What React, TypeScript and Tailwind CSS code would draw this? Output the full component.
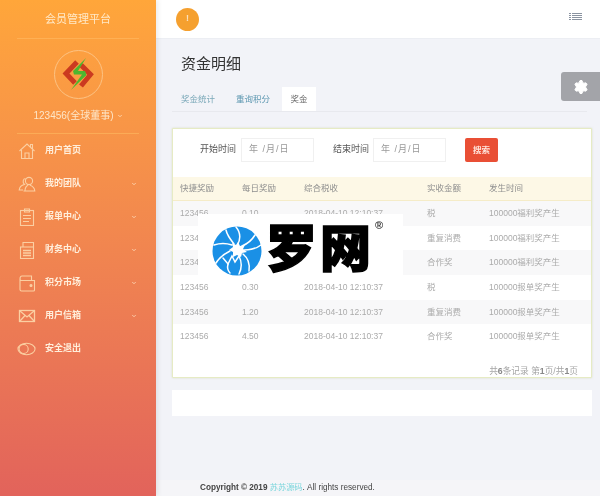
import { ChevronDown, Settings } from "lucide-react";

const font = { fontFamily: '"Liberation Sans", "Noto Sans CJK SC", sans-serif' };

const HomeIcon = () => (
  <svg width="18" height="18" viewBox="0 0 18 18" fill="none" stroke="currentColor" strokeWidth="1.1">
    <path d="M1.5 9 L9 2 L16.5 9" />
    <path d="M3.5 8 V16.5 H14.5 V8" />
    <path d="M7 16.5 V11 H11 V16.5" />
    <path d="M12.5 5 V2.5 H14.5 V7" />
  </svg>
);
const UsersIcon = () => (
  <svg width="18" height="18" viewBox="0 0 18 18" fill="none" stroke="currentColor" strokeWidth="1.1">
    <circle cx="11" cy="6" r="3.6" />
    <path d="M7 16 C7 12.5 8.5 11 10 10.3 M12 10.3 C14 11 16.5 12.5 16.8 16 H5.5" />
    <path d="M7.5 3.5 C5 3.5 4.2 7.5 6.5 9.5 C4 10 1.5 12 1.2 15 H5" />
  </svg>
);
const ClipIcon = () => (
  <svg width="18" height="18" viewBox="0 0 18 18" fill="none" stroke="currentColor" strokeWidth="1.1">
    <rect x="2.5" y="2.5" width="13" height="15" />
    <path d="M6.5 1 H11.5 V4 H6.5 Z" />
    <path d="M5 7.5 H13 M5 10.5 H13 M5 13.5 H11" />
  </svg>
);
const DocIcon = () => (
  <svg width="18" height="18" viewBox="0 0 18 18" fill="none" stroke="currentColor" strokeWidth="1.1">
    <rect x="2.5" y="6" width="13" height="11.5" />
    <path d="M5 6 V1.5 H15.5 V6" />
    <path d="M5 9.5 H13 M5 12 H13 M5 14.5 H13" strokeWidth="1.6" />
  </svg>
);
const WalletIcon = () => (
  <svg width="18" height="18" viewBox="0 0 18 18" fill="none" stroke="currentColor" strokeWidth="1.1">
    <path d="M2 5 V15.5 C2 16.5 2.5 17 3.5 17 H15.5 C16.2 17 16.5 16.6 16.5 16 V6.5 H3.5 C2.5 6.5 2 6 2 5 C2 3.5 2.7 2 4 2 H13.5 V6.5" />
    <circle cx="13" cy="11.5" r="1" fill="currentColor" />
  </svg>
);
const MailIcon = () => (
  <svg width="18" height="18" viewBox="0 0 18 18" fill="none" stroke="currentColor" strokeWidth="1.3">
    <rect x="1.5" y="3.5" width="15" height="11" />
    <path d="M2 4 L9 10 L16 4 M2 14 L7 8.5 M16 14 L11 8.5" />
  </svg>
);
const RingsIcon = () => (
  <svg width="20" height="18" viewBox="0 0 20 18" fill="none" stroke="currentColor" strokeWidth="1.1">
    <ellipse cx="10" cy="9" rx="9" ry="6" />
    <circle cx="7" cy="9" r="4.8" />
  </svg>
);

const nav = [
  { label: "用户首页", Icon: HomeIcon, arrow: false },
  { label: "我的团队", Icon: UsersIcon, arrow: true },
  { label: "报单中心", Icon: ClipIcon, arrow: true },
  { label: "财务中心", Icon: DocIcon, arrow: true },
  { label: "积分市场", Icon: WalletIcon, arrow: true },
  { label: "用户信箱", Icon: MailIcon, arrow: true },
  { label: "安全退出", Icon: RingsIcon, arrow: false },
];

const rows = [
  ["123456", "0.10", "2018-04-10 12:10:37", "税", "100000福利奖产生"],
  ["123456", "0.60", "2018-04-10 12:10:37", "重复消费", "100000福利奖产生"],
  ["123456", "1.50", "2018-04-10 12:10:37", "合作奖", "100000福利奖产生"],
  ["123456", "0.30", "2018-04-10 12:10:37", "税", "100000报单奖产生"],
  ["123456", "1.20", "2018-04-10 12:10:37", "重复消费", "100000报单奖产生"],
  ["123456", "4.50", "2018-04-10 12:10:37", "合作奖", "100000报单奖产生"],
];

const cols = "grid grid-cols-[62px_62px_123px_62px_1fr] pl-[7px] items-center";

function DateBox() {
  return (
    <div className="w-[73px] h-[24px] bg-white border border-[#f0f0f0] flex items-center pl-[7px] text-[9px] text-[#999999] tracking-[1px]">
      年 /月/日
    </div>
  );
}

export default function App() {
  return (
    <div className="w-[600px] h-[496px] overflow-hidden flex bg-[#f2f3f8] relative blur-[0.5px]" style={font}>
      <aside className="w-[156px] h-full shrink-0 bg-gradient-to-b from-[#ffa63a] to-[#e2635b] flex flex-col text-[#fde9d2] shadow-[2px_0_5px_rgba(0,0,0,0.08)] z-10">
        <div className="h-[39px] mx-[17px] border-b border-[#ffb054] flex items-center justify-center text-[11px] text-[#ffe9c8] pt-[1px]">
          会员管理平台
        </div>
        <div className="mt-[11px] mx-auto w-[49px] h-[49px] rounded-full border border-[#fcc384] flex items-center justify-center">
          <svg width="33" height="35" viewBox="0 0 33 35" fill="none">
            <path d="M15 5 L4 16.5 L13 26" stroke="#cb3a20" strokeWidth="5" />
            <path d="M19 8 L28.5 17.5 L19 29" stroke="#cb3a20" strokeWidth="5" />
            <path d="M24 1 L11 14 L12 17.5 L20 17.5 L9 33 L24.5 18 L23 14 L16 14 Z" fill="#4cb62f" />
          </svg>
        </div>
        <div className="mt-[10px] text-center text-[10px] h-[14px] leading-[14px] flex items-center justify-center gap-[3px] text-[#fde6c8]">
          123456(全球董事)
          <ChevronDown size={6} strokeWidth={3} />
        </div>
        <nav className="mt-[10px] mx-[17px] border-t border-[#fbab57]">
          {nav.map(({ label, Icon, arrow }) => (
            <div key={label} className="h-[33px] flex items-center">
              <span className="w-[19px] flex justify-center text-[#fbcfa2]"><Icon /></span>
              <span className="ml-[9px] text-[9px] font-bold text-[#ffeedb] flex-1">{label}</span>
              {arrow && <ChevronDown size={6} strokeWidth={3} className="mr-[2px] text-[#fde2c3]" />}
            </div>
          ))}
        </nav>
      </aside>

      <main className="flex-1 flex flex-col min-w-0">
        <header className="h-[39px] bg-white border-b border-[#eceef3] flex items-center justify-between pl-[20px] pr-[18px] shrink-0">
          <div className="w-[23px] h-[23px] rounded-full bg-[#f5a02f] text-[#fbe0bb] flex items-center justify-center text-[9px] font-bold">!</div>
          <svg width="13" height="10" viewBox="0 0 13 10" stroke="#8a93a0" strokeWidth="1" className="mb-[4px]">
            <path d="M0 1.5 H2 M3 1.5 H13 M0 3.5 H2 M3 3.5 H13 M0 5.5 H2 M3 5.5 H13 M0 7.5 H2 M3 7.5 H13" />
          </svg>
        </header>

        <div className="flex-1 flex flex-col px-[16px]">
          <h1 className="mt-[15px] ml-[9px] text-[15px] leading-[20px] text-[#333333]">资金明细</h1>
          <div className="mt-[13px] h-[25px] flex items-end border-b border-[#e8e9ee] mr-[-3px] text-[8.5px]">
            <span className="ml-[9px] h-[24px] leading-[24px] text-[#7aa8b8]">奖金统计</span>
            <span className="ml-[21px] h-[24px] leading-[24px] text-[#5c97b0]">重询积分</span>
            <span className="ml-[12px] w-[34px] h-[24px] leading-[24px] text-center bg-white text-[#666666]">奖金</span>
          </div>

          <section className="mt-[16px] h-[250px] w-[420px] bg-white border border-[#e6ebc4] rounded-[1px] flex flex-col shadow-[0_0_2px_rgba(190,200,140,0.5)]">
            <div className="h-[48px] pt-[9px] flex items-start">
              <span className="ml-[27px] w-[38px] h-[24px] leading-[22px] text-[9px] text-[#555555]">开始时间</span>
              <div className="ml-[3px]"><DateBox /></div>
              <span className="ml-[19px] w-[38px] h-[24px] leading-[22px] text-[9px] text-[#555555]">结束时间</span>
              <div className="ml-[2px] mr-[19px]"><DateBox /></div>
              <button className="w-[33px] h-[24px] bg-[#e94f35] text-[#ffe5dc] text-[8.5px] rounded-[2px] font-bold">搜索</button>
            </div>
            <div className={`${cols} h-[24px] bg-[#fdf8e6] border-b border-[#f5ecc8] text-[8.5px] text-[#8f8f8f]`}>
              <span>快捷奖励</span>
              <span>每日奖励</span>
              <span>综合税收</span>
              <span>实收金额</span>
              <span>发生时间</span>
            </div>
            {rows.map((r, i) => (
              <div key={i} className={`${cols} h-[24.67px] text-[8.5px] text-[#ababab] ${i === 0 || i === 2 || i === 4 ? "bg-[#f8f8f9]" : "bg-white"}`}>
                {r.map((c, j) => <span key={j} className="whitespace-nowrap">{c}</span>)}
              </div>
            ))}
            <div className="flex-1 flex items-end justify-end pr-[13px] text-[8.7px] leading-[12px] text-[#a5a5a5]">
              <span>共<b className="text-[#888888]">6</b>条记录 第<b className="text-[#888888]">1</b>页/共<b className="text-[#888888]">1</b>页</span>
            </div>
          </section>

          <div className="mt-[12px] h-[26px] w-[420px] bg-white shrink-0" />
          <div className="flex-1" />
        </div>
        <footer className="h-[16px] shrink-0 pl-[44px] text-[8.2px] leading-[16px] bg-[#f5f5f8] text-[#444444] whitespace-nowrap">
          <b>Copyright © 2019</b> <span className="text-[#7dd6dc]">苏苏源码</span>. All rights reserved.
        </footer>
      </main>

      <div className="absolute right-0 top-[72px] w-[39px] h-[29px] bg-[#a3a4a9] rounded-l-[3px] flex items-center justify-center">
        <Settings size={16} fill="#ffffff" strokeWidth={1.5} className="text-white" />
      </div>

      <div className="absolute left-[198px] top-[214px] w-[205px] h-[62px] bg-white flex items-end pl-[14px] z-20">
        <svg width="50" height="50" viewBox="0 0 50 50" className="shrink-0">
          <circle cx="25" cy="25" r="24.5" fill="#1a90e6" />
          <g fill="none" stroke="#ffffff" strokeWidth="1.5" strokeLinecap="round">
            <path d="M25 20 C29 13 29 7 24 1" />
            <path d="M30 20 C35 18 40 14 43 9" />
            <path d="M32 24 C38 24 44 23 49 19" />
            <path d="M31 28 C36 32 38 38 37 45" />
            <path d="M27 30 C30 36 30 42 27 48" />
            <path d="M27 30 L23 36 L20 30 L16 38 L11 32" />
            <path d="M16 38 C15 42 16 45 18 47" />
            <path d="M18 25 C12 28 7 32 4 37" />
            <path d="M20 19 C14 17 8 17 2 19" />
            <path d="M22 18 C18 13 15 9 14 4" />
          </g>
          <path d="M26 16 L28 20 L33 19 L31 23 L35 26 L30 27 L29 31 L25 29 L21 31 L21 26 L17 24 L21 21 L20 17 L24 19 Z" fill="#ffffff" />
        </svg>
        <span
          className="ml-[4px] text-[51px] leading-[52px] text-black whitespace-nowrap tracking-[3px] mb-[5px] [-webkit-text-stroke:1.5px_#000000]"
          style={{ fontFamily: '"Noto Sans CJK SC", sans-serif', fontWeight: 900 }}
        >
          罗网
        </span>
        <span className="absolute left-[177px] top-[4px] text-[11px] leading-[14px] font-bold text-[#333333]">®</span>
      </div>
    </div>
  );
}
